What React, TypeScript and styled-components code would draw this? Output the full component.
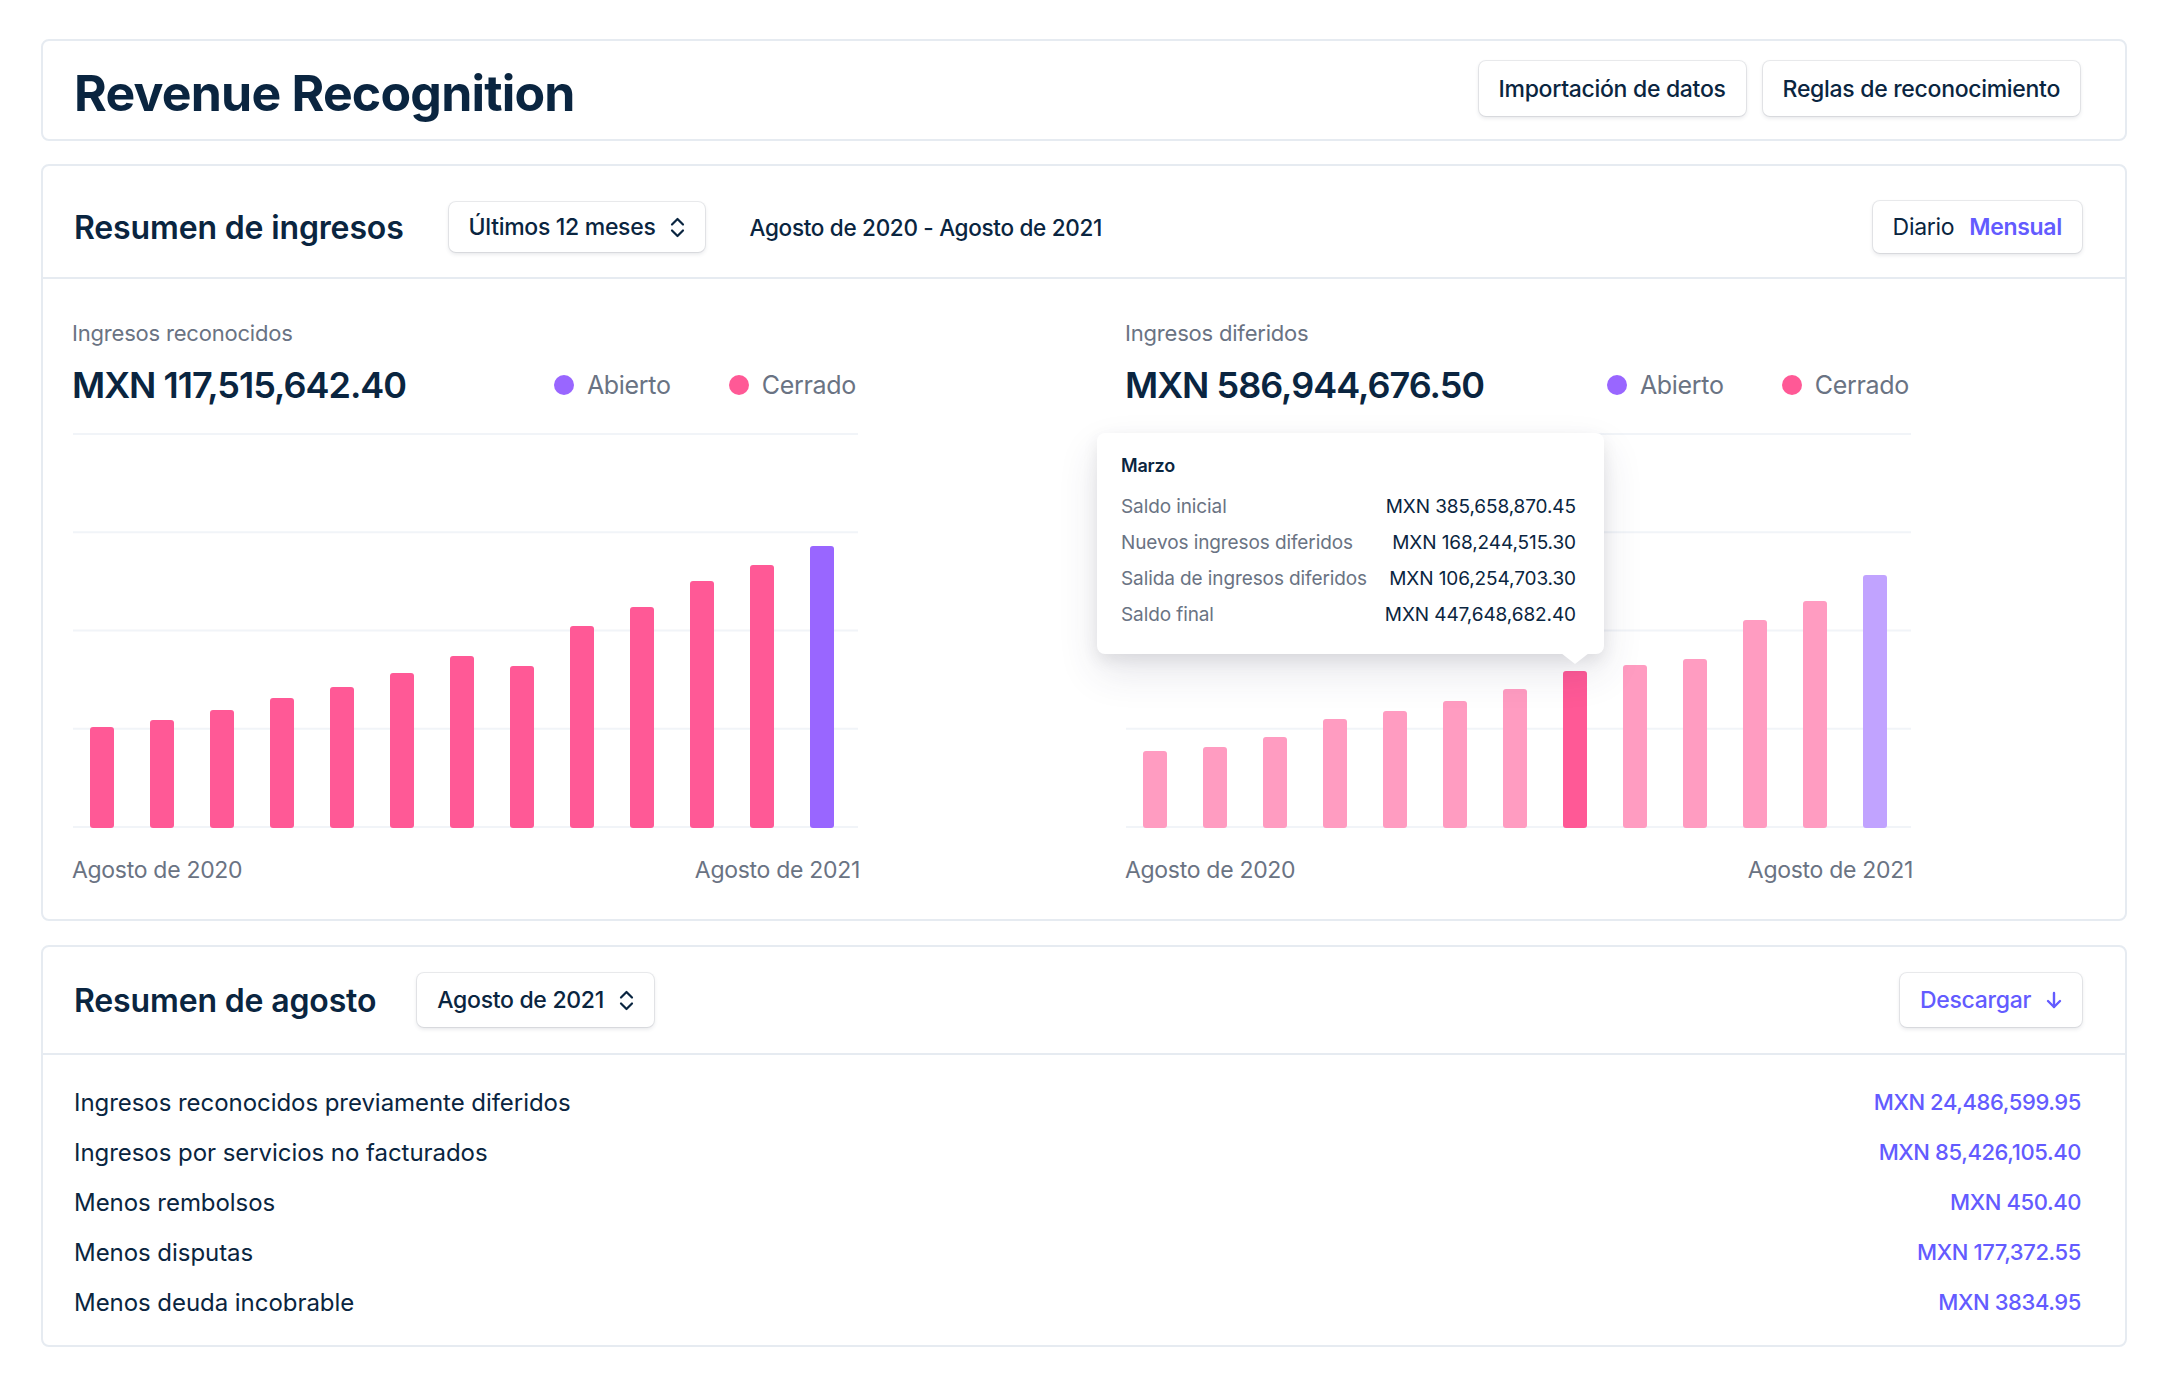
import React from "react";
import styled, { createGlobalStyle } from "styled-components";

const C = {
  ink: "#0A2540",
  gray: "#6A7383",
  purple: "#635BFF",
  line: "#E6EBF1",
  grid: "#F1F4F8",
  pink: "#FF5996",
  pinkSoft: "#FF9CC1",
  violet: "#9966FF",
  violetSoft: "#C1A3FF",
};

const GlobalStyle = createGlobalStyle`
  * { box-sizing: border-box; }
  body {
    margin: 0;
    background: #fff;
    font-family: Inter, "Noto Sans", sans-serif;
    color: ${C.ink};
    -webkit-font-smoothing: antialiased;
  }
`;

const Page = styled.div`
  display: flex;
  flex-direction: column;
  gap: 23px;
  padding: 39px 33px 40px 41px;
`;

const Card = styled.section<{ $mt?: number }>`
  border: 2px solid ${C.line};
  border-radius: 8px;
  background: #fff;
  margin-top: ${(p) => p.$mt ?? 0}px;
`;

const TitleBar = styled.header`
  height: 98px;
  display: flex;
  align-items: center;
  justify-content: space-between;
  padding: 0 45px 0 31px;
`;

const PageTitle = styled.h1`
  margin: 0;
  font-size: 50px;
  font-weight: 700;
  letter-spacing: -0.8px;
  line-height: 1;
  padding-top: 6px;
`;

const ButtonGroup = styled.div`
  display: flex;
  gap: 17px;
  margin-top: -3px;
`;

const Button = styled.button<{ $h: number; $accent?: boolean }>`
  height: ${(p) => p.$h}px;
  display: inline-flex;
  align-items: center;
  gap: 15px;
  padding: 0 20px;
  border: none;
  border-radius: 7px;
  background: #fff;
  box-shadow: 0 0 0 1px rgba(60, 66, 87, 0.1), 0 2px 4px rgba(60, 66, 87, 0.14);
  font-family: inherit;
  font-size: 23px;
  font-weight: 500;
  letter-spacing: -0.3px;
  color: ${(p) => (p.$accent ? C.purple : C.ink)};
  cursor: pointer;
`;

const SectionHeader = styled.div<{ $h: number; $pt: number }>`
  height: ${(p) => p.$h}px;
  display: flex;
  align-items: center;
  padding: ${(p) => p.$pt}px 43px 0 31px;
  border-bottom: 2px solid ${C.line};
`;

const SectionTitle = styled.h2<{ $gap: number }>`
  margin: 0 ${(p) => p.$gap}px 0 0;
  font-size: 32px;
  font-weight: 600;
  letter-spacing: -0.15px;
`;

const RangeText = styled.span`
  margin-left: 44px;
  font-size: 22.5px;
  font-weight: 500;
  letter-spacing: -0.3px;
`;

const Spacer = styled.div`
  flex: 1;
`;

const ToggleOption = styled.span<{ $active?: boolean }>`
  font-weight: ${(p) => (p.$active ? 600 : 400)};
  color: ${(p) => (p.$active ? C.purple : C.ink)};
`;

const ChartsArea = styled.div`
  display: grid;
  grid-template-columns: 788px 788px;
  column-gap: 265px;
  padding: 42px 0 35px 29px;
`;

const Panel = styled.div`
  display: flex;
  flex-direction: column;
`;

const PanelLabel = styled.div`
  font-size: 22px;
  line-height: 24px;
  color: ${C.gray};
  letter-spacing: -0.2px;
`;

const NumberRow = styled.div`
  margin-top: 18px;
  height: 44px;
  display: flex;
  align-items: center;
  justify-content: space-between;
`;

const BigNumber = styled.div`
  font-size: 36px;
  font-weight: 600;
  letter-spacing: -1px;
`;

const Legend = styled.div`
  display: flex;
  gap: 58px;
  padding-right: 4px;
`;

const LegendItem = styled.div`
  display: flex;
  align-items: center;
  gap: 13px;
  font-size: 25px;
  color: ${C.gray};
  letter-spacing: -0.3px;
`;

const Dot = styled.span<{ $color: string }>`
  width: 20px;
  height: 20px;
  border-radius: 50%;
  background: ${(p) => p.$color};
`;

const ChartBox = styled.div`
  position: relative;
  margin-top: 26px;
  height: 396px;
`;

const AxisRow = styled.div`
  margin-top: 27px;
  display: flex;
  justify-content: space-between;
  font-size: 23px;
  line-height: 28px;
  color: ${C.gray};
  letter-spacing: -0.3px;
`;

const Tooltip = styled.div`
  position: absolute;
  left: -28px;
  top: 0;
  width: 507px;
  height: 221px;
  padding: 21px 28px 0 24px;
  background: #fff;
  border-radius: 8px;
  box-shadow: 0 18px 40px rgba(50, 50, 93, 0.12), 0 6px 16px rgba(0, 0, 0, 0.08);
  &::after {
    content: "";
    position: absolute;
    left: 464px;
    bottom: -10px;
    border-left: 14px solid transparent;
    border-right: 14px solid transparent;
    border-top: 11px solid #fff;
  }
`;

const TipTitle = styled.div`
  font-size: 18px;
  line-height: 24px;
  font-weight: 600;
  margin-bottom: 10px;
  letter-spacing: -0.2px;
`;

const TipRow = styled.div`
  display: flex;
  justify-content: space-between;
  height: 36px;
  align-items: center;
  font-size: 19px;
  letter-spacing: -0.1px;
`;

const TipLabel = styled.span`
  color: ${C.gray};
`;

const TipValue = styled.span`
  color: ${C.ink};
`;

const SummaryBody = styled.div`
  padding: 22px 44px 18px 31px;
`;

const SummaryRow = styled.div`
  height: 50px;
  display: flex;
  align-items: center;
  justify-content: space-between;
  font-size: 24px;
  letter-spacing: -0.05px;
`;

const SummaryValue = styled.span`
  color: ${C.purple};
  font-size: 22px;
  font-weight: 500;
  letter-spacing: -0.4px;
`;

const ChevronsUpDown = () => (
  <svg width="15" height="21" viewBox="0 0 15 21" fill="none" stroke="currentColor" strokeWidth="2.2" strokeLinecap="round" strokeLinejoin="round">
    <path d="M2 7.5 7.5 2 13 7.5" />
    <path d="M2 13.5 7.5 19 13 13.5" />
  </svg>
);

const ArrowDown = () => (
  <svg width="16" height="18" viewBox="0 0 16 18" fill="none" stroke="currentColor" strokeWidth="2.4" strokeLinecap="round" strokeLinejoin="round">
    <path d="M8 2v14" />
    <path d="M2 10l6 6 6-6" />
  </svg>
);

type BarChartProps = {
  heights: number[];
  colors: string[];
};

const BarChart = ({ heights, colors }: BarChartProps) => {
  const gridY = [1, 99.25, 197.5, 295.75, 394];
  return (
    <svg width="788" height="396" viewBox="0 0 788 396">
      {gridY.map((y) => (
        <line key={y} x1="1" x2="786" y1={y} y2={y} stroke={C.grid} strokeWidth="2" />
      ))}
      {heights.map((h, i) => (
        <rect key={i} x={18 + i * 60} y={395 - h} width="24" height={h} rx="3" fill={colors[i]} />
      ))}
    </svg>
  );
};

const leftHeights = [101, 108, 118, 130, 141, 155, 172, 162, 202, 221, 247, 263, 282];
const rightHeights = [77, 81, 91, 109, 117, 127, 139, 157, 163, 169, 208, 227, 253];
const leftColors = leftHeights.map((_, i) => (i === 12 ? C.violet : C.pink));
const rightColors = rightHeights.map((_, i) => (i === 12 ? C.violetSoft : i === 7 ? C.pink : C.pinkSoft));

const tooltipRows = [
  ["Saldo inicial", "MXN 385,658,870.45"],
  ["Nuevos ingresos diferidos", "MXN 168,244,515.30"],
  ["Salida de ingresos diferidos", "MXN 106,254,703.30"],
  ["Saldo final", "MXN 447,648,682.40"],
];

const summaryRows = [
  ["Ingresos reconocidos previamente diferidos", "MXN 24,486,599.95"],
  ["Ingresos por servicios no facturados", "MXN 85,426,105.40"],
  ["Menos rembolsos", "MXN 450.40"],
  ["Menos disputas", "MXN 177,372.55"],
  ["Menos deuda incobrable", "MXN 3834.95"],
];

const LegendBlock = () => (
  <Legend>
    <LegendItem>
      <Dot $color={C.violet} />
      Abierto
    </LegendItem>
    <LegendItem>
      <Dot $color={C.pink} />
      Cerrado
    </LegendItem>
  </Legend>
);

export default function App() {
  return (
    <>
      <GlobalStyle />
      <Page>
        <Card>
          <TitleBar>
            <PageTitle>Revenue Recognition</PageTitle>
            <ButtonGroup>
              <Button $h={55}>Importación de datos</Button>
              <Button $h={55}>Reglas de reconocimiento</Button>
            </ButtonGroup>
          </TitleBar>
        </Card>

        <Card>
          <SectionHeader $h={113} $pt={11}>
            <SectionTitle $gap={45}>Resumen de ingresos</SectionTitle>
            <Button $h={50}>
              Últimos 12 meses
              <ChevronsUpDown />
            </Button>
            <RangeText>Agosto de 2020 - Agosto de 2021</RangeText>
            <Spacer />
            <Button $h={52}>
              <ToggleOption>Diario</ToggleOption>
              <ToggleOption $active>Mensual</ToggleOption>
            </Button>
          </SectionHeader>
          <ChartsArea>
            <Panel>
              <PanelLabel>Ingresos reconocidos</PanelLabel>
              <NumberRow>
                <BigNumber>MXN 117,515,642.40</BigNumber>
                <LegendBlock />
              </NumberRow>
              <ChartBox>
                <BarChart heights={leftHeights} colors={leftColors} />
              </ChartBox>
              <AxisRow>
                <span>Agosto de 2020</span>
                <span>Agosto de 2021</span>
              </AxisRow>
            </Panel>
            <Panel>
              <PanelLabel>Ingresos diferidos</PanelLabel>
              <NumberRow>
                <BigNumber>MXN 586,944,676.50</BigNumber>
                <LegendBlock />
              </NumberRow>
              <ChartBox>
                <BarChart heights={rightHeights} colors={rightColors} />
                <Tooltip>
                  <TipTitle>Marzo</TipTitle>
                  {tooltipRows.map(([l, v]) => (
                    <TipRow key={l}>
                      <TipLabel>{l}</TipLabel>
                      <TipValue>{v}</TipValue>
                    </TipRow>
                  ))}
                </Tooltip>
              </ChartBox>
              <AxisRow>
                <span>Agosto de 2020</span>
                <span>Agosto de 2021</span>
              </AxisRow>
            </Panel>
          </ChartsArea>
        </Card>

        <Card $mt={1}>
          <SectionHeader $h={108} $pt={0}>
            <SectionTitle $gap={41}>Resumen de agosto</SectionTitle>
            <Button $h={54}>
              Agosto de 2021
              <ChevronsUpDown />
            </Button>
            <Spacer />
            <Button $h={54} $accent>
              Descargar
              <ArrowDown />
            </Button>
          </SectionHeader>
          <SummaryBody>
            {summaryRows.map(([l, v]) => (
              <SummaryRow key={l}>
                <span>{l}</span>
                <SummaryValue>{v}</SummaryValue>
              </SummaryRow>
            ))}
          </SummaryBody>
        </Card>
      </Page>
    </>
  );
}
